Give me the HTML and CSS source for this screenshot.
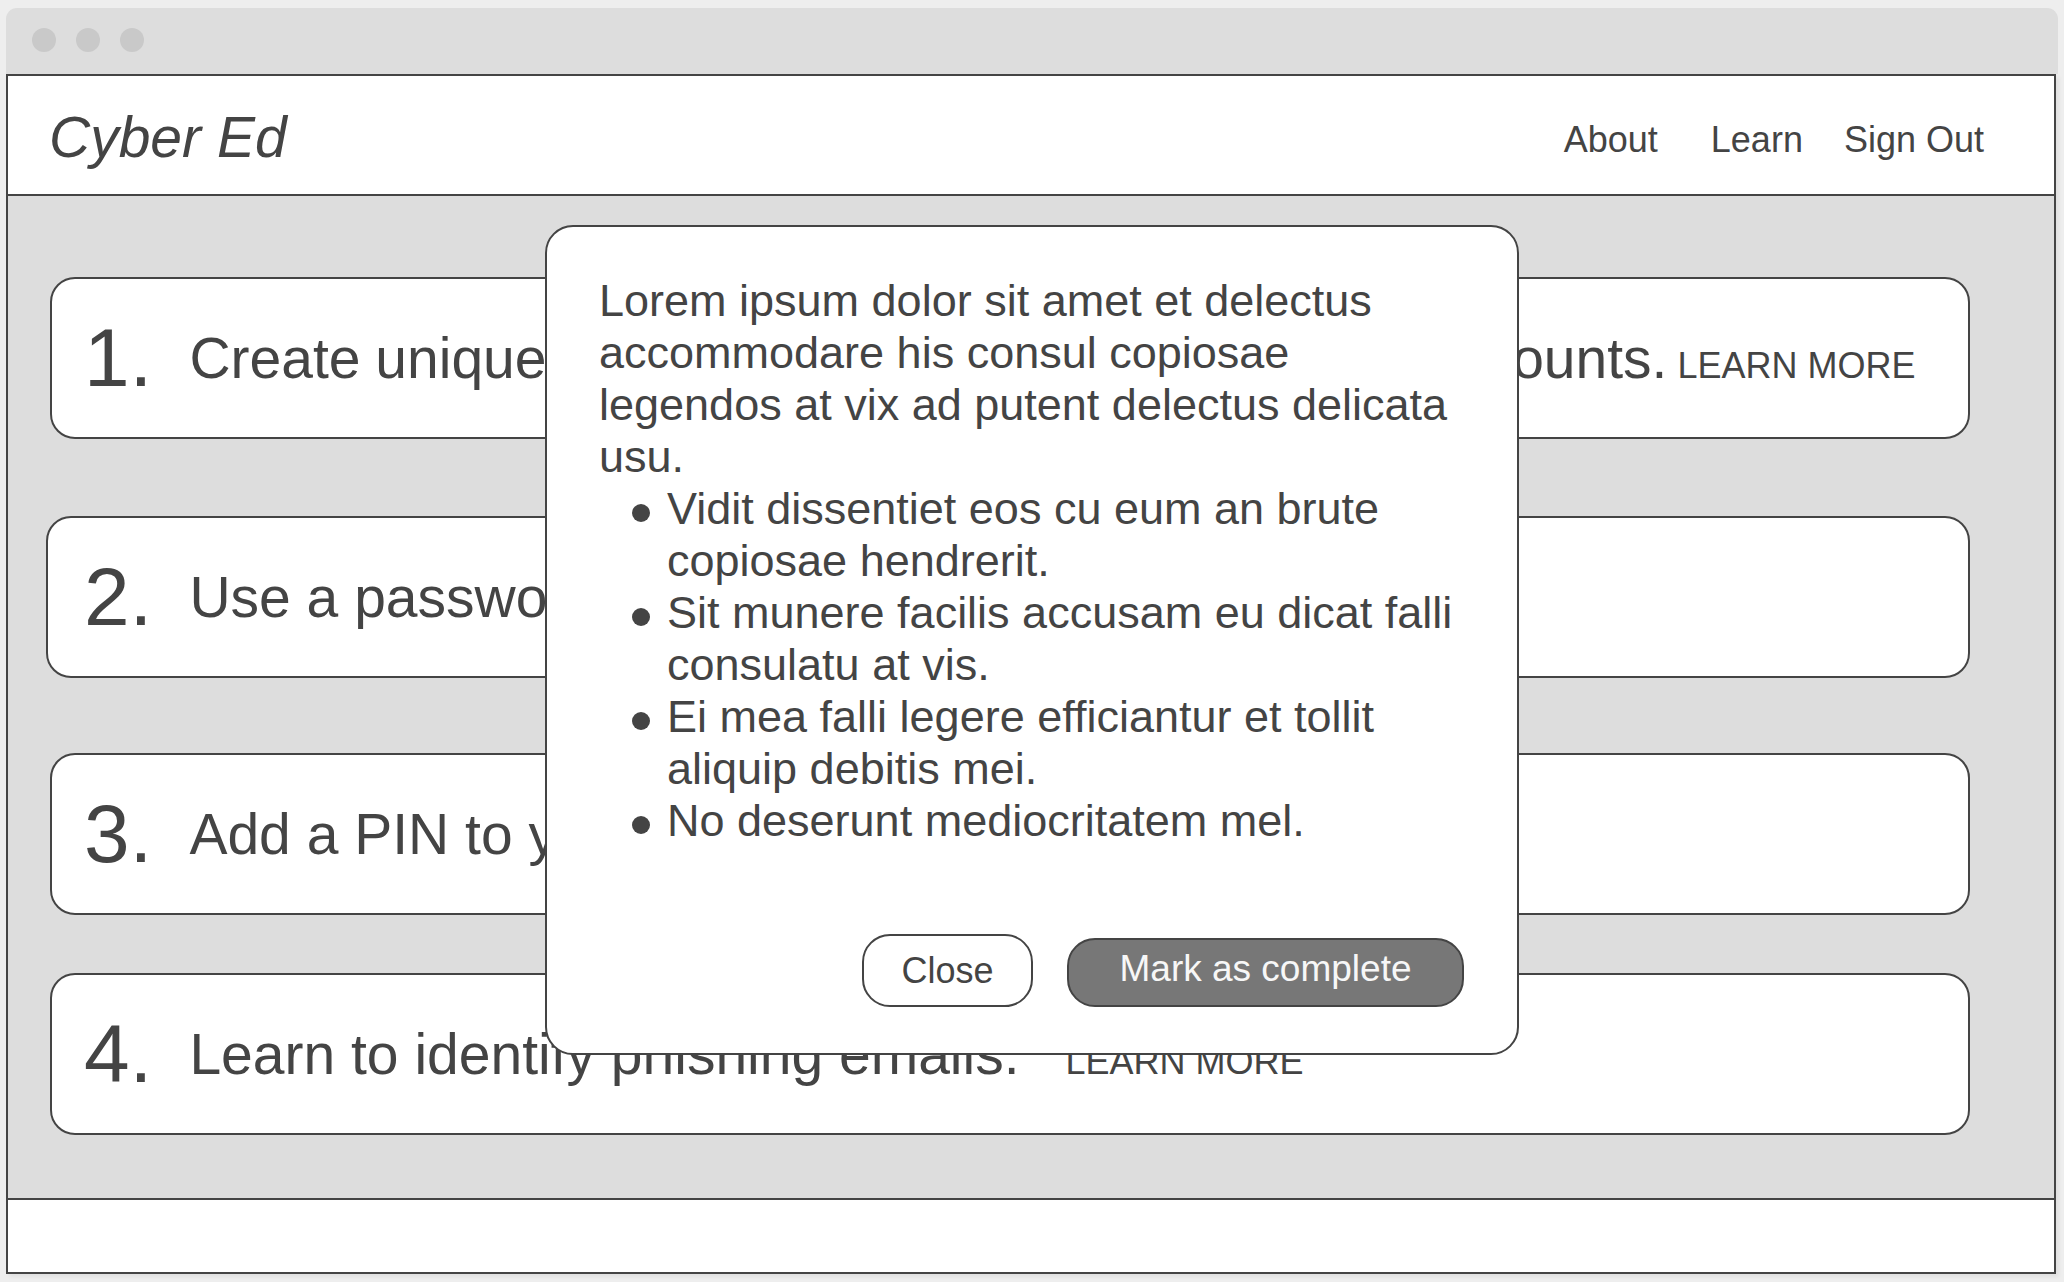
FILE: index.html
```html
<!DOCTYPE html>
<html lang="en">
<head>
<meta charset="utf-8">
<title>Cyber Ed</title>
<link rel="stylesheet" href="styles.css">
</head>
<body>
<div class="window">
  <div class="titlebar">
    <span class="dot"></span>
    <span class="dot"></span>
    <span class="dot"></span>
  </div>
  <div class="frame">
    <header class="header">
      <div class="logo">Cyber Ed</div>
      <nav class="nav">
        <a class="nav-link nav-about">About</a>
        <a class="nav-link">Learn</a>
        <a class="nav-link">Sign Out</a>
      </nav>
    </header>
    <main class="main">
      <div class="card card-1">
        <span class="num">1.</span>
        <span class="step step-tight">Create unique passwords for each of your online accounts.<span class="learn learn-tight">LEARN MORE</span></span>
      </div>
      <div class="card card-2">
        <span class="num">2.</span>
        <span class="step">Use a password manager.<span class="learn">LEARN MORE</span></span>
      </div>
      <div class="card card-3">
        <span class="num">3.</span>
        <span class="step">Add a PIN to your phone.<span class="learn">LEARN MORE</span></span>
      </div>
      <div class="card card-4">
        <span class="num">4.</span>
        <span class="step">Learn to identify phishing emails.<span class="learn">LEARN MORE</span></span>
      </div>

      <div class="modal">
        <p class="modal-text">Lorem ipsum dolor sit amet et delectus accommodare his consul copiosae legendos at vix ad putent delectus delicata usu.</p>
        <ul class="modal-list">
          <li>Vidit dissentiet eos cu eum an brute copiosae hendrerit.</li>
          <li>Sit munere facilis accusam eu dicat falli consulatu at vis.</li>
          <li>Ei mea falli legere efficiantur et tollit aliquip debitis mei.</li>
          <li>No deserunt mediocritatem mel.</li>
        </ul>
        <div class="modal-actions">
          <button class="btn btn-close">Close</button>
          <button class="btn btn-primary">Mark as complete</button>
        </div>
      </div>
    </main>
    <footer class="footer"></footer>
  </div>
</div>
</body>
</html>
```

FILE: styles.css
```css
* { box-sizing: border-box; }

html, body {
  margin: 0;
  padding: 0;
}

body {
  background: #eeeeee;
  font-family: "Liberation Sans", Arial, sans-serif;
  color: #444444;
  width: 2064px;
  height: 1282px;
  overflow: hidden;
}

.window {
  margin: 8px 0 0 6px;
  width: 2050px;
}

.titlebar {
  height: 66px;
  background: #dddddd;
  border-radius: 11px 11px 0 0;
  display: flex;
  align-items: center;
  padding: 0 0 2px 26px;
  gap: 20px;
  margin-right: -2px;
}

.dot {
  width: 24px;
  height: 24px;
  border-radius: 50%;
  background: #c9c9c9;
}

.frame {
  border-left: 2px solid #444444;
  border-right: 2px solid #444444;
  border-bottom: 2px solid #444444;
  background: #dddddd;
  box-shadow: 3px 3px 4px rgba(0, 0, 0, 0.06);
}

.header {
  height: 122px;
  background: #ffffff;
  border-top: 2px solid #444444;
  border-bottom: 2px solid #444444;
  display: flex;
  align-items: center;
  justify-content: space-between;
  padding: 0 70px 0 41px;
}

.logo {
  font-size: 57px;
  font-style: italic;
  padding-top: 4px;
}

.nav {
  display: flex;
  align-items: center;
  gap: 41px;
  padding-top: 10px;
}

.nav-link {
  font-size: 36px;
  color: #444444;
  text-decoration: none;
}

.nav-about {
  margin-right: 12px;
}

.main {
  position: relative;
  padding: 81px 0 63px 0;
}

.card {
  height: 162px;
  width: 1920px;
  margin-left: 42px;
  background: #ffffff;
  border: 2px solid #444444;
  border-radius: 25px;
  display: flex;
  align-items: center;
  padding-left: 32px;
  white-space: nowrap;
}

.card-1 { margin-bottom: 77px; }
.card-2 { margin-bottom: 75px; margin-left: 38px; width: 1924px; padding-left: 36px; }
.card-3 { margin-bottom: 58px; }

.num {
  font-size: 82px;
  margin-right: 37px;
}

.step {
  font-size: 57px;
}

.step-tight {
  word-spacing: -1px;
}

.learn {
  font-size: 36px;
  margin-left: 46px;
  word-spacing: 0;
}

.learn-tight {
  margin-left: 10px;
}

.modal {
  position: absolute;
  top: 29px;
  left: 537px;
  width: 974px;
  background: #ffffff;
  border: 2px solid #444444;
  border-radius: 28px;
  padding: 48px 53px 46px 52px;
  font-size: 45px;
  line-height: 52px;
}

.modal-text {
  margin: 0;
}

.modal-list {
  margin: 0;
  padding: 0;
  list-style: none;
}

.modal-list li {
  display: flex;
}

.modal-list li::before {
  content: "";
  flex: none;
  width: 18px;
  height: 18px;
  border-radius: 50%;
  background: #444444;
  margin: 21px 17px 0 33px;
}

.modal-actions {
  display: flex;
  justify-content: flex-end;
  align-items: flex-end;
  gap: 34px;
  margin-top: 87px;
}

.btn {
  font-family: "Liberation Sans", Arial, sans-serif;
  font-size: 36px;
  border: 2px solid #444444;
  border-radius: 28px;
  display: flex;
  align-items: center;
  justify-content: center;
  padding: 0;
  line-height: 1;
}

.btn-close {
  width: 171px;
  height: 73px;
  background: #ffffff;
  color: #444444;
}

.btn-primary {
  width: 397px;
  height: 69px;
  background: #777777;
  color: #f7f7f7;
  font-size: 37px;
  padding-bottom: 8px;
}

.footer {
  height: 74px;
  background: #ffffff;
  border-top: 2px solid #444444;
}
```
